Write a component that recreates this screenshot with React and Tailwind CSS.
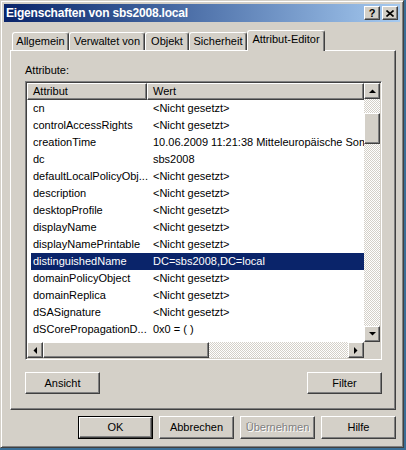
import React from 'react';

const rows = [
    ['cn', '<Nicht gesetzt>'],
    ['controlAccessRights', '<Nicht gesetzt>'],
    ['creationTime', '10.06.2009 11:21:38 Mitteleuropäische Sommerzeit'],
    ['dc', 'sbs2008'],
    ['defaultLocalPolicyObj...', '<Nicht gesetzt>'],
    ['description', '<Nicht gesetzt>'],
    ['desktopProfile', '<Nicht gesetzt>'],
    ['displayName', '<Nicht gesetzt>'],
    ['displayNamePrintable', '<Nicht gesetzt>'],
    ['distinguishedName', 'DC=sbs2008,DC=local', true],
    ['domainPolicyObject', '<Nicht gesetzt>'],
    ['domainReplica', '<Nicht gesetzt>'],
    ['dSASignature', '<Nicht gesetzt>'],
    ['dSCorePropagationD...', '0x0 = ( )'],
    ['eFSPolicy', '<Nicht gesetzt>'],
];

const raised =
    'bg-[#d4d0c8] border border-t-white border-l-white border-r-[#404040] border-b-[#404040] shadow-[inset_-1px_-1px_0_#808080]';

const checker =
    'bg-[image:repeating-conic-gradient(#d4d0c8_0%_25%,#ffffff_0%_50%)] bg-[length:2px_2px]';

const Btn = ({ children, className = '', disabled }) => (
    <div className={`flex items-center justify-center ${raised} ${className}`}>
        <span className={disabled ? 'text-[#808080] [text-shadow:1px_1px_0_#ffffff]' : 'text-black'}>
            {children}
        </span>
    </div>
);

// kleine Dreiecke für die Bildlaufleisten
const Arrow = ({ dir }) => {
    const pts = {
        up: '0,4 7,4 3.5,0.5',
        down: '0,0 7,0 3.5,3.5',
        left: '4,0 4,7 0.5,3.5',
        right: '0,0 0,7 3.5,3.5',
    }[dir];
    const vert = dir === 'up' || dir === 'down';
    return (
        <div className={`w-[16px] h-[16px] flex items-center justify-center ${raised}`}>
            <svg width={vert ? 7 : 4} height={vert ? 4 : 7} viewBox={vert ? '0 0 7 4' : '0 0 4 7'}>
                <polygon points={pts} fill="#000" />
            </svg>
        </div>
    );
};

const Tab = ({ children, width, active }) => (
    <div
        className={`flex justify-center bg-[#d4d0c8] border-t border-l border-t-white border-l-white rounded-t-[3px] shadow-[inset_-1px_0_0_#808080] border-r border-r-[#404040] ${
            active ? 'h-[21px] mb-[-1px] relative z-10 pt-[2px]' : 'h-[18px] pt-[2px]'
        }`}
        style={{ width }}
    >
        {children}
    </div>
);

export default function App() {
    return (
        <div className="w-[406px] h-[450px] bg-[#3a6e96] font-['Liberation_Sans',Arial,sans-serif] text-[11px] leading-[13px] text-black">
            <div className="w-[404px] h-[448px] bg-[#d4d0c8] border border-t-[#d4d0c8] border-l-[#d4d0c8] border-r-[#404040] border-b-[#404040] shadow-[inset_1px_1px_0_#ffffff,inset_-1px_-1px_0_#808080] p-[3px] flex flex-col">
                {/* Titelleiste */}
                <div className="h-[18px] bg-linear-to-r from-[#0a246a] to-[#a6caf0] flex items-center pl-[2px] pr-[2px]">
                    <span className="text-white font-bold text-[12px] tracking-[-0.2px]">Eigenschaften von sbs2008.local</span>
                    <div className="ml-auto flex gap-[2px]">
                        <div className={`w-[16px] h-[14px] flex items-center justify-center ${raised}`}>
                            <span className="font-bold text-[11px] leading-[11px]">?</span>
                        </div>
                        <div className={`w-[16px] h-[14px] flex items-center justify-center ${raised}`}>
                            <svg width="8" height="7" viewBox="0 0 8 7">
                                <path d="M0.5 0.5 L7.5 6.5 M7.5 0.5 L0.5 6.5" stroke="#000" strokeWidth="1.6" />
                            </svg>
                        </div>
                    </div>
                </div>

                <div className="pl-[6px] pt-[8px] flex flex-col">
                    {/* Registerkarten */}
                    <div className="h-[20px] flex items-end pl-[2px]">
                        <Tab width={57}>Allgemein</Tab>
                        <Tab width={76}>Verwaltet von</Tab>
                        <Tab width={44}>Objekt</Tab>
                        <Tab width={58}>Sicherheit</Tab>
                        <Tab width={78} active>Attribut-Editor</Tab>
                    </div>

                    {/* Seite */}
                    <div className="w-[386px] h-[360px] border border-t-white border-l-white border-r-[#404040] border-b-[#404040] shadow-[inset_-1px_-1px_0_#808080] pl-[14px] pt-[13px] flex flex-col">
                        <div>Attribute:</div>

                        <div className="mt-[4px] w-[357px] h-[279px] bg-white border border-t-[#808080] border-l-[#808080] border-r-white border-b-white shadow-[inset_1px_1px_0_#404040,inset_-1px_-1px_0_#d4d0c8] p-[1px] flex flex-col">
                            <div className="flex h-[259px]">
                                <div className="w-[337px] flex flex-col">
                                    <div className="flex h-[17px]">
                                        <div className={`w-[120px] pl-[5px] flex items-center ${raised}`}>Attribut</div>
                                        <div className={`flex-1 pl-[5px] flex items-center ${raised}`}>Wert</div>
                                    </div>
                                    <div className="flex-1 overflow-hidden pl-[4px]">
                                        {rows.map(([name, val, sel], i) => (
                                            <div
                                                key={i}
                                                className={`h-[17px] flex items-center whitespace-nowrap ${
                                                    sel ? 'bg-[#0a246a] text-white' : ''
                                                }`}
                                            >
                                                <div className="w-[120px] pl-[2px] overflow-hidden">{name}</div>
                                                <div className="flex-1 pl-[2px] overflow-hidden">{val}</div>
                                            </div>
                                        ))}
                                    </div>
                                </div>
                                <div className="w-[16px] flex flex-col">
                                    <Arrow dir="up" />
                                    <div className={`flex-1 ${checker} pt-[14px]`}>
                                        <div className={`h-[31px] ${raised}`} />
                                    </div>
                                    <Arrow dir="down" />
                                </div>
                            </div>
                            <div className="flex h-[16px]">
                                <Arrow dir="left" />
                                <div className={`w-[166px] ${raised}`} />
                                <div className={`flex-1 ${checker}`} />
                                <Arrow dir="right" />
                                <div className="w-[16px] bg-[#d4d0c8]" />
                            </div>
                        </div>

                        <div className="mt-[12px] w-[357px] flex justify-between">
                            <Btn className="w-[75px] h-[22px]">Ansicht</Btn>
                            <Btn className="w-[75px] h-[22px]">Filter</Btn>
                        </div>
                    </div>

                    {/* Dialogschaltflächen */}
                    <div className="mt-[6px] w-[386px] flex justify-end gap-[6px]">
                        <div className="border border-black">
                            <Btn className="w-[73px] h-[21px]">OK</Btn>
                        </div>
                        <Btn className="w-[75px] h-[23px]">Abbrechen</Btn>
                        <Btn className="w-[75px] h-[23px]" disabled>Übernehmen</Btn>
                        <Btn className="w-[75px] h-[23px]">Hilfe</Btn>
                    </div>
                </div>
            </div>
        </div>
    );
}
